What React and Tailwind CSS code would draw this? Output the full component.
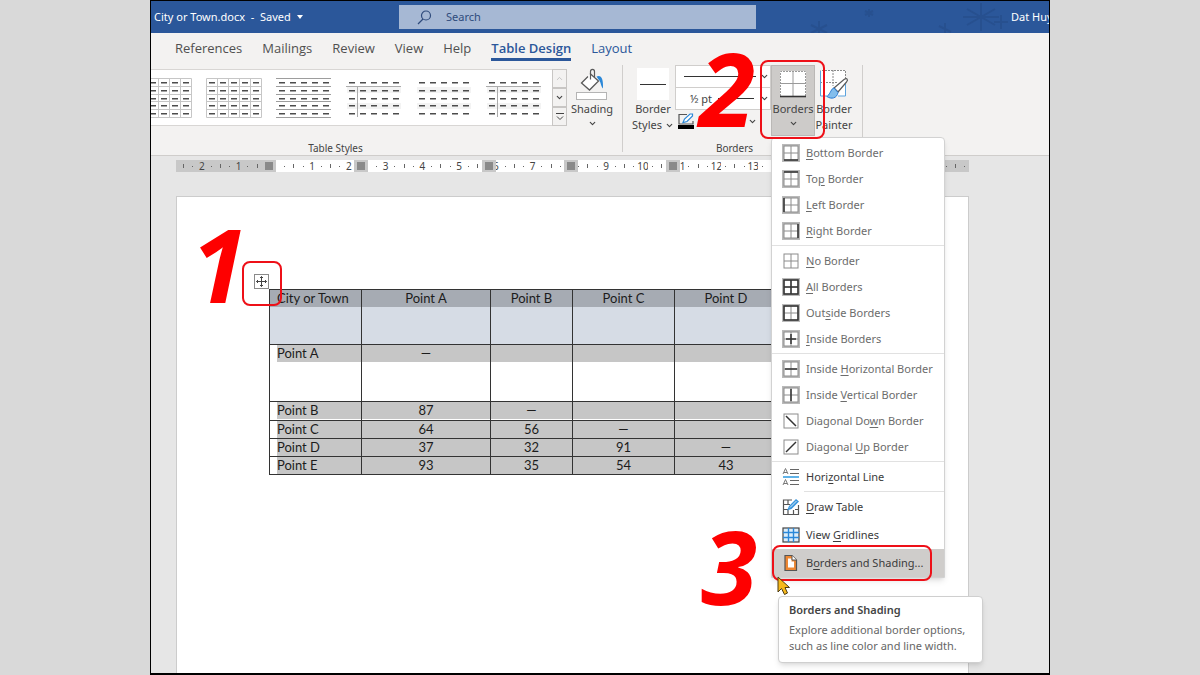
import { Fragment } from 'react';
import { ChevronDown, ChevronUp } from 'lucide-react';
import clsx from 'clsx';

const TABS = ['References', 'Mailings', 'Review', 'View', 'Help', 'Table Design', 'Layout'];

const MENU = [
  [
    { icon: 'bottom', label: 'Bottom Border', key: 0 },
    { icon: 'top', label: 'Top Border', key: 2 },
    { icon: 'left', label: 'Left Border', key: 0 },
    { icon: 'right', label: 'Right Border', key: 0 },
  ],
  [
    { icon: 'none', label: 'No Border', key: 0 },
    { icon: 'all', label: 'All Borders', key: 0 },
    { icon: 'outside', label: 'Outside Borders', key: 3 },
    { icon: 'inside', label: 'Inside Borders', key: 0 },
  ],
  [
    { icon: 'insideH', label: 'Inside Horizontal Border', key: 7 },
    { icon: 'insideV', label: 'Inside Vertical Border', key: 7 },
    { icon: 'diagDown', label: 'Diagonal Down Border', key: 11 },
    { icon: 'diagUp', label: 'Diagonal Up Border', key: 9 },
  ],
];

// dark strokes drawn over the 14x14 cell for each border kind
const BORDER_LINES = {
  bottom: 'M2 16H16',
  top: 'M2 2H16',
  left: 'M2 2V16',
  right: 'M16 2V16',
  none: '',
  all: 'M2 2H16V16H2ZM9 2V16M2 9H16',
  outside: 'M2 2H16V16H2Z',
  inside: 'M9 4V14M4 9H14',
  insideH: 'M3 9H15',
  insideV: 'M9 3V15',
  diagDown: 'M4 4L14 14',
  diagUp: 'M14 4L4 14',
};

const ROWS = [
  { name: 'Point A', cells: ['—', '', '', ''], height: 'h-[57px]' },
  { name: 'Point B', cells: ['87', '—', '', ''], height: 'h-[19px]' },
  { name: 'Point C', cells: ['64', '56', '—', ''], height: 'h-[18px]' },
  { name: 'Point D', cells: ['37', '32', '91', '—'], height: 'h-[18px]' },
  { name: 'Point E', cells: ['93', '35', '54', '43'], height: 'h-[18px]' },
];

const COLUMN_MARKERS = [86, 178, 306, 388, 490];

function BorderIcon({ kind }) {
  const diagonal = kind.startsWith('diag');
  const pressed = kind !== 'none' && !diagonal;
  return (
    <svg width="18" height="18" viewBox="0 0 18 18" fill="none">
      {pressed && <rect width="18" height="18" fill="#b9b9b9" />}
      <rect x="2" y="2" width="14" height="14" fill="#fff" stroke="#8c8c8c" />
      {!diagonal && <path d="M9 2V16M2 9H16" stroke="#8c8c8c" />}
      <path d={BORDER_LINES[kind]} stroke="#333" strokeWidth="1.5" />
    </svg>
  );
}

function StyleThumb({ kind }) {
  const steps = [0, 1, 2, 3, 4];
  return (
    <svg width="56" height="40" viewBox="0 0 56 40" fill="none" className="shrink-0">
      {kind === 'header' || kind === 'plain' ? (
        <path d="M1 12H55M1 28H55" stroke="#f3f3f3" strokeWidth="6" />
      ) : null}
      {kind === 'grid' && (
        <path d="M.5 .5H55.5V39.5H.5ZM.5 8.5H55.5M.5 16.5H55.5M.5 23.5H55.5M.5 31.5H55.5M11.5 0V40M22.5 0V40M33.5 0V40M44.5 0V40" stroke="#c6c6c6" />
      )}
      {kind === 'lines' && (
        <path d="M0 .5H55M0 8.5H55M0 16.5H55M0 23.5H55M0 31.5H55M0 39.5H55" stroke="#9d9d9d" />
      )}
      {kind === 'header' && <path d="M0 8.5H55M11.5 8V39" stroke="#ababab" />}
      {steps.map(r => steps.map(c => (
        <rect key={`${r}-${c}`} x={3 + c * 11} y={4 + Math.round(r * 7.75)} width="6" height="1.5" fill="#4c4c4c" />
      )))}
    </svg>
  );
}

function BucketIcon() {
  return (
    <svg width="32" height="32" viewBox="0 0 32 32" fill="none">
      <path d="M12 8.500L5.500 15L13.500 22L22.500 13L14 5.500" fill="#fff" stroke="#5a5a5a" strokeWidth="1.300" />
      <path d="M14.500 11.500V3.500C14.500 .6 18.500 .6 18.500 3.500V9" stroke="#5a5a5a" strokeWidth="1.200" />
      <path d="M20.500 8.500C25 6.500 27.500 10 27 20.500C24.500 18 25 13.500 22.500 11.500Z" fill="#2b88d8" />
      <rect x=".5" y="24.500" width="30" height="7" fill="#fff" stroke="#b4b4b4" />
    </svg>
  );
}

function PenColorIcon() {
  return (
    <svg width="16" height="17" viewBox="0 0 16 17" fill="none">
      <path d="M9 1.500H1V11H15V8" stroke="#555" strokeWidth="1.200" />
      <path d="M5 9.500L6.500 6L12 1H14.500V3L9 8.500Z" fill="#fff" stroke="#2b88d8" strokeWidth="1.200" />
      <rect y="12" width="16" height="4" fill="#000" />
    </svg>
  );
}

function BordersIcon() {
  return (
    <svg width="28" height="28" viewBox="0 0 28 28" fill="none">
      <rect x="1" y="1" width="26" height="25" fill="#fff" />
      <path d="M1.500 26V1.500H26.500V26" stroke="#9a9a9a" strokeDasharray="2 1" />
      <path d="M14 2V26M2 13.500H26" stroke="#9a9a9a" />
      <path d="M1 26.500H27" stroke="#333" strokeWidth="1.600" />
    </svg>
  );
}

function PainterIcon() {
  return (
    <svg width="30" height="32" viewBox="0 0 30 32" fill="none">
      <rect x="1" y="1" width="25" height="26" fill="#fff" />
      <path d="M26.500 10V1.500H1.500M14 1V17M1 13.500H18" stroke="#8a8a8a" strokeDasharray="2 1" />
      <path d="M1.500 2V27H8M26.500 15V27H19" stroke="#5ba3dd" />
      <path d="M15 19L25 10.500C28 8.500 29.500 10.500 27.500 13L19 23Z" fill="#fff" stroke="#5a5a5a" strokeWidth="1.200" />
      <path d="M15 19C12 19.500 12 24 8 27.500C12 30.500 18 29.500 19 23.500Z" fill="#83beec" stroke="#2b7cd3" />
    </svg>
  );
}

function HorizontalLineIcon() {
  return (
    <svg width="18" height="18" viewBox="0 0 18 18" fill="none">
      <path d="M1 6L3.500 .5L6 6M2 4.500H5M1 17L3.500 11.500L6 17M2 15.500H5" stroke="#777" />
      <path d="M8 1.500H17M8 5.500H17M8 12.500H17M8 16.500H17" stroke="#666" strokeWidth="1.200" />
      <path d="M1 9H17" stroke="#2b9ae0" strokeWidth="1.500" />
    </svg>
  );
}

function DrawTableIcon() {
  return (
    <svg width="18" height="18" viewBox="0 0 18 18" fill="none">
      <path d="M10 2H1.500V16.500H16.500V7M1.500 6.500H8M1.500 11.500H6M6 2V7M6 12V16.500M11.500 12V16.500M13 11.500H16.500" stroke="#555" strokeWidth="1.200" />
      <path d="M5 12.500L7 8L14 1L17 3.500L9.500 11Z" fill="#3a96dd" />
      <path d="M8 9.500L14.500 3" stroke="#d5eafa" />
    </svg>
  );
}

function GridlinesIcon() {
  return (
    <svg width="18" height="16" viewBox="0 0 18 16" fill="none">
      <rect x="1" y="1" width="16" height="14" fill="#dceefb" stroke="#444" strokeWidth="1.200" />
      <path d="M6.500 1V15M11.500 1V15M1 5.500H17M1 10.500H17" stroke="#2b88d8" strokeWidth="1.400" />
    </svg>
  );
}

function PageBordersIcon() {
  return (
    <svg width="18" height="18" viewBox="0 0 18 18" fill="none">
      <path d="M3 1.500H10L14.500 6V16.500H3Z" fill="#ed8733" stroke="#555" strokeWidth="1.200" />
      <path d="M6 4.500H9.500V7.500H12V13.500H6Z" fill="#fff" />
      <path d="M10 1.500V6H14.500" fill="#fff" stroke="#555" />
    </svg>
  );
}

function Accel({ label, at }) {
  return (
    <span>
      {label.slice(0, at)}<u className="underline-offset-2">{label[at]}</u>{label.slice(at + 1)}
    </span>
  );
}

function Callout({ children, className }) {
  return (
    <span className={clsx('pointer-events-none absolute font-["Open_Sans",sans-serif] text-[102px] leading-[74px] font-bold italic text-[#fe0000]', className)}>
      {children}
    </span>
  );
}

function Ring({ className }) {
  return <span className={clsx('pointer-events-none absolute rounded-lg border-2 border-[#ee1018]', className)} />;
}

function MenuItem({ icon, label, at, className }) {
  return (
    <button type="button" role="menuitem" className={clsx('flex w-full items-center gap-1.5 pl-[10px] text-left whitespace-nowrap', className)}>
      <span className="flex w-[18px] justify-center">{icon}</span>
      <Accel label={label} at={at} />
    </button>
  );
}

function BordersMenu() {
  return (
    <div role="menu" className="absolute top-[72px] left-0 z-20 w-[174px] rounded-t border border-[#d2d2d2] bg-white text-[11px] text-[#3b3b3b] shadow-md">
      {MENU.map((group, i) => (
        <Fragment key={i}>
          <div className="pt-0.5 pb-px">
            {group.map(item => (
              <MenuItem key={item.label} icon={<BorderIcon kind={item.icon} />} label={item.label} at={item.key} className="h-[26px] text-[#6c6c6c]" />
            ))}
          </div>
          <hr className="border-[#e1e1e1]" />
        </Fragment>
      ))}
      <div className="pt-0.5 pb-px">
        <MenuItem icon={<HorizontalLineIcon />} label="Horizontal Line" at={4} className="h-[26px]" />
      </div>
      <hr className="ml-8 border-[#e1e1e1]" />
      <div className="pt-px">
        <MenuItem icon={<DrawTableIcon />} label="Draw Table" at={0} className="h-7" />
        <MenuItem icon={<GridlinesIcon />} label="View Gridlines" at={5} className="h-7" />
      </div>
      <div className="relative">
        <MenuItem icon={<PageBordersIcon />} label="Borders and Shading..." at={1} className="h-7 bg-[#cfcdcb]" />
        <Ring className="-top-1 left-0 h-9 w-[160px]" />
        <Callout className="-top-5 -left-[71px]">3</Callout>
        <div role="tooltip" className="absolute top-[47px] left-1.5 w-[205px] rounded border border-[#cfcfcf] bg-white px-[10px] pt-[5px] pb-2 text-[#666] shadow-md">
          <p className="mb-1 leading-4 font-semibold text-[#444]">Borders and Shading</p>
          <p className="leading-4">Explore additional border options, such as line color and line width.</p>
        </div>
        <svg width="14" height="20" viewBox="0 0 14 20" className="absolute top-[27px] left-[5px]">
          <path d="M1 1V16L4.500 12.500L7.500 18.500L10.500 17L8 11.500H12.500Z" fill="#f6b81a" stroke="#4d3b12" />
        </svg>
      </div>
    </div>
  );
}

function TitleBar() {
  return (
    <header className="relative flex h-8 shrink-0 items-center overflow-hidden bg-[#2b579a] text-[11px] text-white">
      <svg width="260" height="32" viewBox="0 0 260 32" fill="none" className="absolute right-0">
        <g stroke="#27508f" strokeWidth="2">
          <path d="M30 20V32M22 24L38 32M38 24L22 32M80 8V16M76 10L84 14M84 10L76 14" />
          <path d="M192 2V30M178 8L206 24M206 8L178 24M174 16H210M212 14V28M205 21H219M156 22V32M150 25L162 31" />
        </g>
      </svg>
      <button type="button" className="flex w-[248px] items-center gap-1.5 pl-[3px] whitespace-pre">
        City or Town.docx  -  Saved
        <svg width="6" height="4" viewBox="0 0 6 4"><path d="M0 0H6L3 4Z" fill="#fff" /></svg>
      </button>
      <div className="relative flex h-6 w-[357px] items-center gap-3.5 bg-[#a6b8d4] pl-[18px]">
        <svg width="15" height="15" viewBox="0 0 15 15" fill="none" stroke="#2f4b7c" strokeWidth="1.200" className="shrink-0">
          <circle cx="9" cy="5.500" r="4.500" /><path d="M6 9L1 14" />
        </svg>
        <input type="search" aria-label="Search" placeholder="Search" className="w-full bg-transparent outline-none placeholder:text-[#2f4b7c]" />
      </div>
      <span className="relative ml-auto w-[38px] whitespace-nowrap">Dat Huy</span>
    </header>
  );
}

function GalleryButton({ label, children }) {
  return (
    <button type="button" aria-label={label} className="flex h-[19px] w-[15px] items-center justify-center border border-[#c8c6c4] bg-[#f3f2f1]">
      {children}
    </button>
  );
}

function Ribbon() {
  return (
    <section className="relative z-10 flex h-[91px] shrink-0 border-b border-[#cfcdcb] bg-[#f3f2f1] pb-[3px] text-[11px] leading-4 text-[#444]">
      <div className="flex w-[472px] shrink-0 flex-col justify-between border-r border-[#d0cecc]">
        <div className="flex items-start">
          <div className="mt-1 flex h-[57px] w-[401px] items-center justify-end gap-3.5 overflow-hidden border-y border-[#d8d6d4] bg-white pr-2.5">
            {['grid', 'grid', 'lines', 'header', 'plain', 'header'].map((kind, i) => <StyleThumb key={i} kind={kind} />)}
          </div>
          <div className="mt-1">
            <GalleryButton label="Previous styles"><ChevronUp size={9} className="text-[#b5b5b5]" /></GalleryButton>
            <GalleryButton label="Next styles"><ChevronDown size={9} strokeWidth={3} /></GalleryButton>
            <GalleryButton label="More styles">
              <svg width="8" height="8" viewBox="0 0 8 8" fill="none" stroke="#444"><path d="M0 .5H8M1 3.500L4 6.500L7 3.500" /></svg>
            </GalleryButton>
          </div>
          <button type="button" className="flex w-[50px] flex-col items-center pt-[3px]">
            <BucketIcon />
            <span className="mt-px">Shading</span>
            <ChevronDown size={9} strokeWidth={3} className="mt-0.5" />
          </button>
        </div>
        <span className="pr-[102px] text-center text-[10px] leading-2">Table Styles</span>
      </div>

      <div className="flex w-[240px] shrink-0 flex-col justify-between border-r border-[#d0cecc]">
        <div className="flex h-[72px]">
          <button type="button" className="flex w-[52px] flex-col items-center pt-[3px] pl-2">
            <span className="flex h-8 w-8 items-center bg-white px-[3px]"><span className="h-px w-full bg-[#333]" /></span>
            <span className="mt-px">Border</span>
            <span className="flex items-center gap-[3px]">Styles <ChevronDown size={9} strokeWidth={3} /></span>
          </button>
          <div className="flex w-[96px] flex-col">
            <button type="button" aria-label="Line style" className="flex h-[23px] items-center justify-between border border-[#d0cecc] bg-white pr-px pl-2">
              <span className="h-px w-[72px] bg-[#333]" />
              <ChevronDown size={9} strokeWidth={3} />
            </button>
            <button type="button" aria-label="Line weight" className="-mt-px flex h-[23px] items-center justify-between border border-[#d0cecc] bg-white pr-px pl-[14px] whitespace-nowrap">
              ½ pt
              <span className="h-px w-[36px] bg-[#333]" />
              <ChevronDown size={9} strokeWidth={3} />
            </button>
            <button type="button" aria-label="Pen color" className="mt-[3px] flex items-center justify-between pr-[14px] pl-[3px]">
              <PenColorIcon />
              <ChevronDown size={9} strokeWidth={3} />
            </button>
          </div>
          <div className="relative">
            <button type="button" aria-haspopup="menu" className="flex h-[71px] w-[44px] flex-col items-center border border-[#bab8b6] bg-[#cdcbc9] pt-1">
              <BordersIcon />
              <span className="mt-[3px]">Borders</span>
              <ChevronDown size={9} strokeWidth={3} className="mt-0.5" />
            </button>
            <BordersMenu />
            <Ring className="-top-[5px] -left-[11px] z-30 h-[79px] w-[65px]" />
            <Callout className="-top-3.5 -left-[72px]">2</Callout>
          </div>
          <button type="button" className="flex w-[38px] flex-col items-center pt-1">
            <PainterIcon />
            <span>Border</span>
            <span>Painter</span>
          </button>
        </div>
        <span className="pr-4 text-center text-[10px] leading-2">Borders</span>
      </div>
    </section>
  );
}

function Ruler() {
  const slots = Array.from({ length: 86 }, (_, i) => i - 10);
  return (
    <div className="relative flex h-3 bg-[#c8c8c8] pl-[3px] text-[10px] leading-3 text-[#444]">
      {slots.map(k => (
        <span key={k} className={clsx('flex min-w-0 flex-1 items-center justify-center', k >= 0 && k < 62 && 'bg-white')}>
          {k % 4 === 0 && k !== 0 && k !== 32 && k < 56 && Math.abs(k / 4)}
          {k % 4 !== 0 && k % 2 === 0 && <i className="h-1 w-px bg-[#666]" />}
          {k % 2 !== 0 && <i className="h-px w-px bg-[#666]" />}
        </span>
      ))}
      {COLUMN_MARKERS.map(x => (
        <span key={x} className="absolute top-0 flex h-3 w-[14px] items-center justify-center bg-[#c8c8c8]" style={{ left: x }}>
          <span className="h-2 w-2 bg-[#8a8a8a]" />
        </span>
      ))}
    </div>
  );
}

function DistanceTable() {
  return (
    <table className="w-[508px] table-fixed border-collapse text-[13px] leading-[17px] text-[#1c1c1c] font-[Lato,sans-serif]">
      <colgroup>
        <col className="w-[92px]" /><col className="w-[129px]" /><col className="w-[82px]" /><col className="w-[102px]" /><col className="w-[103px]" />
      </colgroup>
      <thead>
        <tr className="h-[55px] bg-[#d6dce5]">
          {['City or Town', 'Point A', 'Point B', 'Point C', 'Point D'].map((h, i) => (
            <th key={h} scope="col" className="border border-[#333] p-0 align-top font-normal">
              <div className={clsx('h-[17px] bg-[#a6abb3] whitespace-nowrap', i === 0 && 'pl-[7px] text-left')}>{h}</div>
            </th>
          ))}
        </tr>
      </thead>
      <tbody>
        {ROWS.map(row => (
          <tr key={row.name} className={row.height}>
            <th scope="row" className="border border-[#333] p-0 pl-[7px] text-left align-top font-normal">
              <div className="h-[17px] bg-[#c6c6c6]">{row.name}</div>
            </th>
            {row.cells.map((c, i) => (
              <td key={i} className="border border-[#333] p-0 text-center align-top">
                <div className="h-[17px] bg-[#c6c6c6]">{c}</div>
              </td>
            ))}
          </tr>
        ))}
      </tbody>
    </table>
  );
}

export default function App() {
  return (
    <div className="h-screen bg-[#d9d9d9] px-[150px] font-['Noto_Sans',sans-serif]">
      <div className="flex h-full flex-col overflow-hidden border border-b-2 border-black bg-[#e6e6e6]">
        <TitleBar />
        <nav className="flex h-8 shrink-0 gap-5 bg-[#f3f2f1] pl-6 font-['Open_Sans',sans-serif] text-[13px] text-[#505050]">
          {TABS.map(t => (
            <a key={t} href="#" className={clsx(
              'flex h-7 items-center border-b-[3px] pt-1.5 whitespace-nowrap',
              t === 'Table Design' ? 'border-[#2b579a] font-semibold text-[#2b579a]' : 'border-transparent',
              t === 'Layout' && 'text-[#2b579a]',
            )}>{t}</a>
          ))}
        </nav>
        <Ribbon />
        <main className="flex min-h-0 flex-1 flex-col pt-1 pr-20 pl-[25px]">
          <Ruler />
          <div className="mt-6 min-h-0 flex-1 border border-b-0 border-[#cccccc] bg-white pt-[92px] pl-[92px]">
            <div className="relative">
              <DistanceTable />
              <button type="button" aria-label="Move table" className="absolute -top-[15px] -left-[15px]">
                <svg width="15" height="15" viewBox="0 0 15 15" fill="none">
                  <rect x=".5" y=".5" width="14" height="14" fill="#fff" stroke="#8a8a8a" />
                  <path d="M7.500 2.500V12.500M2.500 7.500H12.500M6 4L7.500 2.500L9 4M6 11L7.500 12.500L9 11M4 6L2.500 7.500L4 9M11 6L12.500 7.500L11 9" stroke="#444" />
                </svg>
              </button>
              <Ring className="-top-7 -left-[27px] h-[45px] w-[40px]" />
              <Callout className="-top-[62px] -left-[78px]">1</Callout>
            </div>
          </div>
        </main>
      </div>
    </div>
  );
}
